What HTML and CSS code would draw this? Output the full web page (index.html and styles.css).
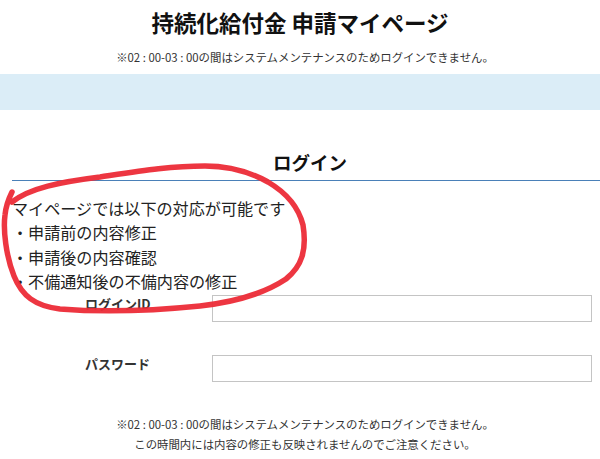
FILE: index.html
```html
<!DOCTYPE html>
<html lang="ja">
<head>
<meta charset="utf-8">
<title>持続化給付金 申請マイページ</title>
<link rel="stylesheet" href="styles.css">
</head>
<body>
<div class="page">
  <header class="header">
    <h1 class="title">持続化給付金 申請マイページ</h1>
    <p class="notice">※02 : 00-03 : 00の間はシステムメンテナンスのためログインできません。</p>
  </header>
  <div class="band"></div>
  <section class="login">
    <h2 class="login-title">ログイン</h2>
    <div class="info">
      <p>マイページでは以下の対応が可能です</p>
      <p>・申請前の内容修正</p>
      <p>・申請後の内容確認</p>
      <p>・不備通知後の不備内容の修正</p>
    </div>
  </section>
  <form class="form">
    <div class="row">
      <label class="label">ログインID</label>
      <input class="input" type="text">
    </div>
    <div class="row">
      <label class="label">パスワード</label>
      <input class="input" type="password">
    </div>
  </form>
  <footer class="footer">
    <p>※02 : 00-03 : 00の間はシステムメンテナンスのためログインできません。</p>
    <p>この時間内には内容の修正も反映されませんのでご注意ください。</p>
  </footer>
  <svg class="scribble" width="600" height="459" viewBox="0 0 600 459">
    <path d="M12 202 C 30 188, 60 182, 100 177 C 140 171, 170 166, 205 166 C 228 166, 250 172, 268 182 C 285 192, 298 205, 303 225 C 307 250, 302 266, 286 279 C 265 293, 236 302, 200 306 C 160 310, 110 313, 60 309 C 35 306, 22 296, 14 276 C 6 256, 3 230, 5 215 C 6 205, 9 198, 12 192"
      fill="none" stroke="#ec2b37" stroke-width="5.5" stroke-linecap="round" stroke-linejoin="round" opacity="0.95"/>
  </svg>
</div>
</body>
</html>
```
FILE: styles.css
```css
* { box-sizing: border-box; }
html, body { margin: 0; padding: 0; background: #fff; }
body {
  font-family: "Noto Sans CJK JP", "Noto Sans", sans-serif;
  color: #222;
  overflow: hidden;
}
p { margin: 0; }
.page {
  position: relative;
  width: 600px;
  height: 459px;
  overflow: hidden;
}
.header {
  padding-top: 7px;
  text-align: center;
}
.title {
  margin: 0;
  font-size: 22.5px;
  line-height: 31px;
  font-weight: 700;
  color: #111;
}
.notice {
  margin-top: 11px;
  font-size: 11.4px;
  line-height: 16px;
  color: #333;
  padding-left: 10px;
}
.band {
  margin-top: 9px;
  height: 36px;
  background: #dbedf7;
}
.login {
  margin-left: 12px;
  width: 596px;
}
.login-title {
  margin: 39px 0 0;
  font-size: 18.5px;
  line-height: 26px;
  font-weight: 700;
  text-align: center;
  color: #111;
  padding-bottom: 5px;
  border-bottom: 1px solid #4a80b8;
}
.info {
  margin-top: 15px;
  font-size: 16.1px;
  line-height: 24.3px;
  color: #222;
}
.form {
  margin: 0;
  padding-top: 2px;
  display: flex;
  flex-direction: column;
  gap: 33px;
}
.row {
  display: flex;
  align-items: flex-start;
  padding-left: 85px;
}
.label {
  width: 127px;
  font-size: 13px;
  line-height: 18px;
  font-weight: 700;
  color: #333;
}
.input {
  width: 380px;
  height: 27px;
  margin: 0;
  border: 1px solid #c4c4c4;
  background: #fff;
  padding: 0 6px;
}
.footer {
  margin-top: 32px;
  text-align: center;
  font-size: 11.4px;
  line-height: 20px;
  color: #333;
  padding-left: 10px;
}
.scribble {
  position: absolute;
  left: 0;
  top: 0;
  pointer-events: none;
}
```
